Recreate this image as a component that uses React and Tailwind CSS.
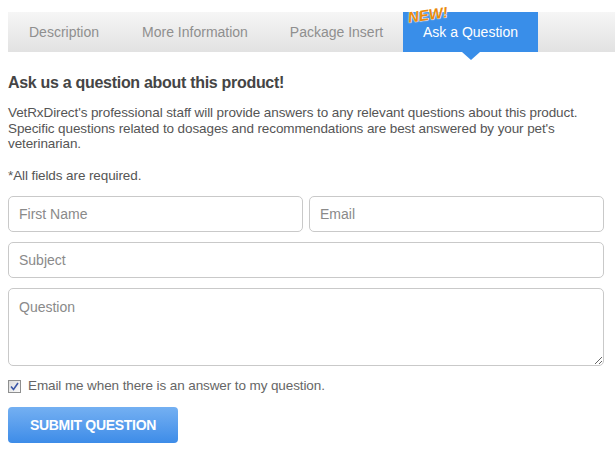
import { useState } from 'react'

const TABS = [
  { label: 'Description', w: 'w-[112px]' },
  { label: 'More Information', w: 'w-[150px]' },
  { label: 'Package Insert', w: 'w-[133px]' },
]

export default function App() {
  const [notify, setNotify] = useState(true)

  return (
    <div className="w-[615px] h-[450px] bg-white overflow-hidden" style={{ fontFamily: '"Liberation Sans", Arial, sans-serif' }}>
      {/* Tabs */}
      <div className="pt-3 pl-2">
        <div className="flex h-10 bg-gradient-to-b from-[#f6f6f6] to-[#e2e2e2]">
          {TABS.map(t => (
            <div key={t.label} className={`${t.w} flex items-center justify-center text-[14px] text-[#8f8f8f]`}>
              {t.label}
            </div>
          ))}
          <div className="relative w-[135px] bg-[#398ee9] flex items-center justify-center text-[14px] text-white">
            Ask a Question
            <span className="absolute left-[5px] top-[-8px] -rotate-[8deg] text-[15px] font-bold italic text-[#ea8a0c] [-webkit-text-stroke:0.6px_white] [paint-order:stroke_fill] [text-shadow:0_0_2px_white]">NEW!</span>
            <span className="absolute left-1/2 -translate-x-1/2 top-full w-0 h-0 border-l-[9px] border-r-[9px] border-t-[8px] border-l-transparent border-r-transparent border-t-[#398ee9]" />
          </div>
        </div>
      </div>

      {/* Body */}
      <div className="px-2">
        <h2 className="mt-[21px] text-[16px] font-bold tracking-[-0.3px] text-[#454545] leading-5">Ask us a question about this product!</h2>
        <p className="mt-[12px] text-[13.5px] tracking-[-0.1px] text-[#555] leading-[15.5px]">
          VetRxDirect's professional staff will provide answers to any relevant questions about this product. Specific questions related to dosages and recommendations are best answered by your pet's veterinarian.
        </p>
        <p className="mt-[16px] text-[13.5px] tracking-[-0.1px] text-[#555] leading-[15.5px]">*All fields are required.</p>

        <form className="mt-[13px] flex flex-col gap-[10px] w-[596px]" onSubmit={e => e.preventDefault()}>
          <div className="flex gap-[6px]">
            <input placeholder="First Name" className="flex-1 min-w-0 h-[36px] px-[10px] border border-[#c9c9c9] rounded-[5px] text-[14px] text-[#555] placeholder:text-[#8a8a8a] outline-none" />
            <input placeholder="Email" className="flex-1 min-w-0 h-[36px] px-[10px] border border-[#c9c9c9] rounded-[5px] text-[14px] text-[#555] placeholder:text-[#8a8a8a] outline-none" />
          </div>
          <input placeholder="Subject" className="h-[36px] px-[10px] border border-[#c9c9c9] rounded-[5px] text-[14px] text-[#555] placeholder:text-[#8a8a8a] outline-none" />
          <textarea placeholder="Question" className="h-[78px] px-[10px] py-[8px] border border-[#c9c9c9] rounded-[5px] text-[14px] text-[#555] placeholder:text-[#8a8a8a] outline-none resize-y" />

          <label className="flex items-center gap-[7px] text-[13.5px] tracking-[-0.1px] text-[#666] cursor-pointer">
            <input type="checkbox" checked={notify} onChange={e => setNotify(e.target.checked)} className="sr-only" />
            <span className="w-[13px] h-[13px] border border-[#8e8f8f] bg-gradient-to-br from-[#dcdcdc] to-[#fafafa] flex items-center justify-center">
              {notify && (
                <svg width="9" height="9" viewBox="0 0 9 9">
                  <path d="M1 4.5 L3.5 7.5 L8 1" fill="none" stroke="#3a56a6" strokeWidth="1.6" />
                </svg>
              )}
            </span>
            Email me when there is an answer to my question.
          </label>

          <button type="submit" className="mt-[1px] w-[170px] h-[36px] rounded-[4px] bg-gradient-to-b from-[#74b0f2] to-[#3d8ce8] text-white text-[14px] font-bold tracking-[-0.3px]">
            SUBMIT QUESTION
          </button>
        </form>
      </div>
    </div>
  )
}
